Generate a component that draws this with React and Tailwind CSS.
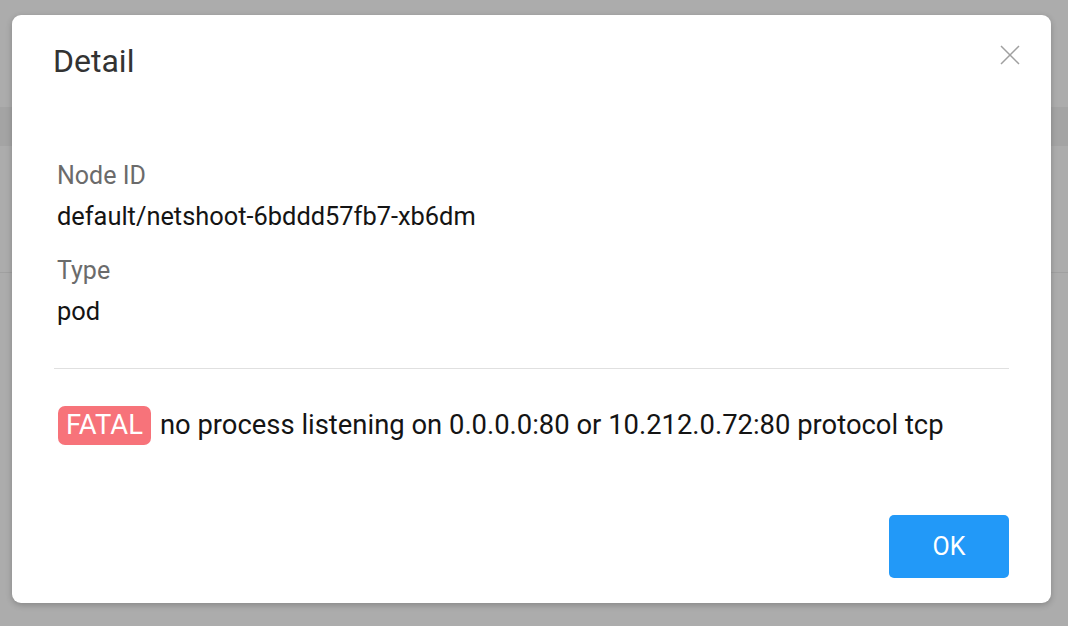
import { useState } from 'react';

const fields = [
  { label: 'Node ID', value: 'default/netshoot-6bddd57fb7-xb6dm' },
  { label: 'Type', value: 'pod' },
];

function CloseIcon() {
  return (
    <svg viewBox="0 0 20 20" className="h-5 w-5" fill="none" stroke="#a0a0a0" strokeWidth="1.5">
      <path d="M1 1 L19 19 M19 1 L1 19" />
    </svg>
  );
}

export default function App() {
  const [open, setOpen] = useState(true);

  return (
    <div className="relative h-[626px] w-full overflow-hidden bg-[#acacac] font-['Roboto',sans-serif]">
      {/* page behind the overlay */}
      <div className="flex h-full flex-col">
        <div className="h-[107px]" />
        <div className="h-[39px] bg-[#a4a4a4]" />
        <div className="h-[126px]" />
        <div className="h-px bg-[#a0a0a0]" />
        <div className="flex-1" />
      </div>

      {/* Dialog */}
      {open && (
        <div className="absolute left-[12px] top-[15px] flex w-[1039px] flex-col rounded-[9px] bg-white px-[42px] pb-[25px] pt-[26px] shadow-[0_2px_6px_rgba(0,0,0,0.22)]">
          <h2 className="-ml-[1px] text-[32px] leading-[40px] text-[#333333]">Detail</h2>
          <button onClick={() => setOpen(false)} className="absolute right-[31px] top-[30px]">
            <CloseIcon />
          </button>

          <div className="mt-[75px] flex flex-col gap-[15px] pl-[3px] leading-[40px]">
            {fields.map((f) => (
              <div key={f.label}>
                <div className="text-[25px] text-[#6b6b6b]">{f.label}</div>
                <div className="text-[25.4px] text-[#141414]">{f.value}</div>
              </div>
            ))}
          </div>

          <div className="mt-[37px] h-px bg-[#e0e0e0]" />

          <div className="mt-[37px] flex items-center pl-[4px] text-[27.4px] leading-[31px]">
            <span className="rounded-[7px] bg-[#f7737a] px-[8px] py-[4px] text-white">FATAL</span>
            <span className="ml-[9px] text-[#141414]">
              no process listening on 0.0.0.0:80 or 10.212.0.72:80 protocol tcp
            </span>
          </div>

          <button
            onClick={() => setOpen(false)}
            className="mt-[70px] h-[63px] w-[120px] self-end rounded-[5px] bg-[#2299f8] text-[25px] text-white"
          >
            OK
          </button>
        </div>
      )}
    </div>
  );
}
